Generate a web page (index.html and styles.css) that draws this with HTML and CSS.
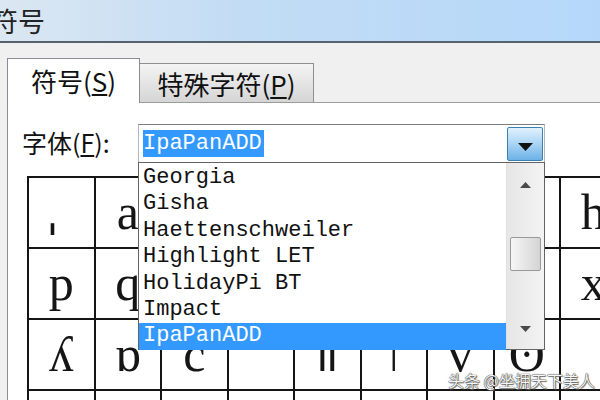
FILE: index.html
```html
<!DOCTYPE html>
<html lang="zh-CN">
<head>
    <meta charset="UTF-8">
    <title>符号</title>
    <link rel="stylesheet" href="styles.css">
</head>
<body>
    <div class="titlebar"><span class="title">符号</span></div>
    <div class="tabs">
        <div class="tab tab-active">符号(<u>S</u>)</div>
        <div class="tab">特殊字符(<u>P</u>)</div>
    </div>
    <div class="panel">
        <div class="font-row">
            <label class="font-label">字体(<u>F</u>):</label>
            <div class="combo">
                <span class="combo-text">IpaPanADD</span>
                <span class="combo-btn">
                    <svg width="15" height="8" viewBox="0 0 15 8"><path d="M0 0H15L7.5 8Z" fill="#111"/></svg>
                </span>
                <div class="dropdown">
                    <ul class="font-list">
                        <li>Georgia</li>
                        <li>Gisha</li>
                        <li>Haettenschweiler</li>
                        <li>Highlight LET</li>
                        <li>HolidayPi BT</li>
                        <li>Impact</li>
                        <li class="selected">IpaPanADD</li>
                    </ul>
                    <div class="scrollbar">
                        <div class="sb-btn"><svg width="11" height="6" viewBox="0 0 11 6"><path d="M0 6H11L5.5 0Z" fill="#4a4a4a"/></svg></div>
                        <div class="sb-thumb"></div>
                        <div class="sb-fill"></div>
                        <div class="sb-btn sb-down"><svg width="11" height="6" viewBox="0 0 11 6"><path d="M0 0H11L5.5 6Z" fill="#4a4a4a"/></svg></div>
                    </div>
                </div>
            </div>
        </div>
        <div class="symbol-grid">
            <div class="cell small">ˌ</div><div class="cell">a</div><div class="cell">b</div><div class="cell">c</div><div class="cell">d</div><div class="cell">e</div><div class="cell">f</div><div class="cell"></div><div class="cell">h</div>
            <div class="cell">p</div><div class="cell">q</div><div class="cell">r</div><div class="cell">s</div><div class="cell">t</div><div class="cell">u</div><div class="cell">v</div><div class="cell"></div><div class="cell">x</div>
            <div class="cell">ʎ</div><div class="cell">ɒ</div><div class="cell">c</div><div class="cell"></div><div class="cell bars">ǁ</div><div class="cell">ǀ</div><div class="cell">v</div><div class="cell">ʘ</div><div class="cell"></div>
            <div class="cell"></div><div class="cell"></div><div class="cell"></div><div class="cell"></div><div class="cell"></div><div class="cell"></div><div class="cell"></div><div class="cell"></div><div class="cell"></div>
        </div>
    </div>
    <div class="watermark">头条 @坐拥天下美人</div>
</body>
</html>
```

FILE: styles.css
```css
body {
    margin: 0;
    width: 600px;
    height: 400px;
    overflow: hidden;
    background-color: #f0f0f0;
    font-family: "Noto Sans CJK SC", sans-serif;
    color: #111;
}
.titlebar {
    height: 41px;
    border-bottom: 2px solid #56626e;
    background: linear-gradient(to right, #dbe7f2, #c2dcf4 40%, #b5d8fa);
    display: flex;
    align-items: center;
    overflow: hidden;
}
.title {
    margin-left: -9px;
    font-size: 27px;
    color: #222;
}
.tabs {
    display: flex;
    align-items: flex-end;
    padding: 15px 0 0 7px;
}
.tab {
    height: 39px;
    width: 175px;
    box-sizing: border-box;
    margin-left: -1px;
    border: 1px solid #8e8f8f;
    border-bottom: none;
    background: linear-gradient(#f4f4f4, #d5d5d5);
    font-size: 26px;
    display: flex;
    align-items: center;
    justify-content: center;
}
.tab-active {
    position: relative;
    z-index: 1;
    height: 45px;
    width: 133px;
    margin: 0 0 -1px 0;
    border-color: #898c95;
    background: #fff;
    padding-bottom: 2px;
}
.panel {
    height: 297px;
    overflow: hidden;
    border-top: 1px solid #9c9c9c;
    border-left: 1px solid #8d8d8d;
    background: #fff;
    margin-left: 7px;
}
.font-row {
    display: flex;
    align-items: center;
    margin-top: 21px;
    padding-left: 14px;
}
.font-label {
    width: 116px;
    font-size: 25px;
    padding-bottom: 3px;
}
.combo {
    position: relative;
    z-index: 2;
    width: 407px;
    height: 39px;
    box-sizing: border-box;
    border: 1px solid #b2b8c0;
    border-top-color: #7c7c7c;
    padding: 0 1px 0 4px;
    display: flex;
    align-items: center;
    justify-content: space-between;
    background: #fff;
}
.combo-text {
    font-family: "Liberation Mono", monospace;
    font-size: 22px;
    line-height: 27px;
    background: #3399ff;
    color: #fff;
    padding-right: 2px;
}
.combo-btn {
    width: 36px;
    height: 34px;
    box-sizing: border-box;
    border: 1px solid #3c7fb1;
    border-radius: 2px;
    background: linear-gradient(#e2f1fd, #a9d4f5 50%, #6cb1e6);
    display: flex;
    align-items: center;
    justify-content: center;
    padding-top: 6px;
}
.dropdown {
    position: absolute;
    top: 100%;
    left: -1px;
    width: 407px;
    height: 188px;
    box-sizing: border-box;
    border: 1px solid #646464;
    background: #fff;
    display: flex;
}
.font-list {
    list-style: none;
    margin: 0;
    padding: 2px 0 0;
    width: 367px;
    font-family: "Liberation Mono", monospace;
    font-size: 22px;
    line-height: 26.4px;
}
.font-list li {
    padding-left: 4px;
    color: #111;
}
.font-list .selected {
    background: #3399ff;
    color: #fff;
}
.scrollbar {
    flex: 1;
    display: flex;
    flex-direction: column;
    align-items: center;
    background: linear-gradient(to right, #e6e6e6, #f3f3f3);
    border-left: 1px solid #e0e0e0;
}
.sb-btn {
    height: 44px;
    display: flex;
    align-items: center;
    justify-content: center;
}
.sb-down {
    height: 40px;
}
.sb-thumb {
    margin-top: 30px;
    width: 31px;
    height: 34px;
    box-sizing: border-box;
    border: 1px solid #999;
    border-radius: 2px;
    background: linear-gradient(to right, #f6f6f6, #d4d4d4);
}
.sb-fill {
    flex: 1;
}
.symbol-grid {
    display: grid;
    grid-template-columns: repeat(9, 66.5px);
    grid-auto-rows: 71px;
    margin: 13px 0 0 19px;
    border-top: 2px solid #151515;
    border-left: 2px solid #151515;
}
.cell {
    box-sizing: border-box;
    border-right: 2px solid #151515;
    border-bottom: 2px solid #151515;
    font-family: "Liberation Serif", "DejaVu Serif", serif;
    font-size: 50px;
    line-height: 69px;
    text-align: center;
    color: #151515;
}
.cell.small {
    padding-right: 18px;
    font-family: "DejaVu Serif", serif;
}
.cell.bars {
    font-family: "DejaVu Serif", serif;
}
.watermark {
    position: absolute;
    left: 448px;
    top: 368px;
    font-size: 16px;
    color: #f6f6f6;
    text-shadow: 0 0 1px #333, 0 0 1px #333, 1px 1px 1px #777;
}
```
